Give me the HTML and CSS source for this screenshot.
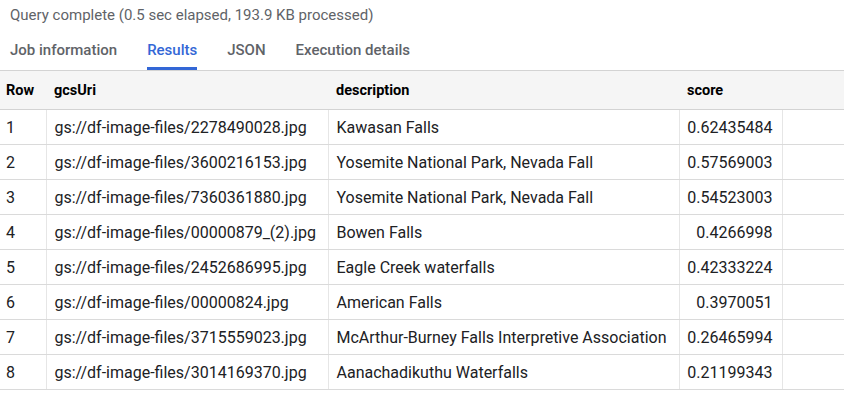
FILE: index.html
```html
<!DOCTYPE html>
<html>
<head>
<meta charset="utf-8">
<link rel="stylesheet" href="styles.css">
</head>
<body>
<div class="status">Query complete (0.5 sec elapsed, 193.9 KB processed)</div>
<div class="tabs">
  <div class="tab">Job information</div>
  <div class="tab active">Results</div>
  <div class="tab">JSON</div>
  <div class="tab">Execution details</div>
</div>
<table class="results">
  <colgroup>
    <col class="c-row"><col class="c-uri"><col class="c-desc"><col class="c-score"><col class="c-fill">
  </colgroup>
  <thead>
    <tr><th>Row</th><th>gcsUri</th><th>description</th><th>score</th><th></th></tr>
  </thead>
  <tbody>
    <tr><td>1</td><td>gs://df-image-files/2278490028.jpg</td><td>Kawasan Falls</td><td class="num">0.62435484</td><td class="fill"></td></tr>
    <tr><td>2</td><td>gs://df-image-files/3600216153.jpg</td><td>Yosemite National Park, Nevada Fall</td><td class="num">0.57569003</td><td class="fill"></td></tr>
    <tr><td>3</td><td>gs://df-image-files/7360361880.jpg</td><td>Yosemite National Park, Nevada Fall</td><td class="num">0.54523003</td><td class="fill"></td></tr>
    <tr><td>4</td><td>gs://df-image-files/00000879_(2).jpg</td><td>Bowen Falls</td><td class="num">0.4266998</td><td class="fill"></td></tr>
    <tr><td>5</td><td>gs://df-image-files/2452686995.jpg</td><td>Eagle Creek waterfalls</td><td class="num">0.42333224</td><td class="fill"></td></tr>
    <tr><td>6</td><td>gs://df-image-files/00000824.jpg</td><td>American Falls</td><td class="num">0.3970051</td><td class="fill"></td></tr>
    <tr><td>7</td><td>gs://df-image-files/3715559023.jpg</td><td>McArthur-Burney Falls Interpretive Association</td><td class="num">0.26465994</td><td class="fill"></td></tr>
    <tr><td>8</td><td>gs://df-image-files/3014169370.jpg</td><td>Aanachadikuthu Waterfalls</td><td class="num">0.21199343</td><td class="fill"></td></tr>
  </tbody>
</table>
</body>
</html>
```
FILE: styles.css
```css
html, body {
  margin: 0;
  padding: 0;
  background: #fff;
  font-family: Roboto, "Liberation Sans", Arial, sans-serif;
}
.status {
  height: 30px;
  line-height: 30px;
  padding-left: 10px;
  font-size: 15px;
  color: #5f6368;
}
.tabs {
  display: flex;
  gap: 30px;
  padding-left: 10px;
  height: 40px;
  border-bottom: 1px solid #d3d3d3;
}
.tab {
  font-size: 15px;
  font-weight: 500;
  color: #5f6368;
  padding-top: 3px;
  line-height: 34px;
  border-bottom: 3px solid transparent;
}
.tab.active {
  color: #3367d6;
  border-bottom-color: #3367d6;
}
.results {
  border-collapse: collapse;
  table-layout: fixed;
  width: 844px;
  font-size: 16px;
  color: #202124;
}
.c-row { width: 46px; }
.c-uri { width: 282px; }
.c-desc { width: 351px; }
.c-score { width: 103px; }
.c-fill { width: 62px; }
.results th {
  background: #f5f5f5;
  height: 38px;
  padding: 0 0 0 8px;
  text-align: left;
  font-weight: 700;
  font-size: 14.5px;
  color: #000;
  border-bottom: 1px solid #d3d3d3;
}
.results th:first-child { padding-left: 6px; }
.results td {
  height: 34px;
  padding: 0 0 0 8px;
  border-bottom: 1px solid #dadada;
  border-right: 1px solid #e6e6e6;
  white-space: nowrap;
}
.results td:first-child { padding-left: 6px; }
.results td.num {
  text-align: right;
  padding: 0 9px 0 0;
}
.results td.fill { border-right: none; }
```
